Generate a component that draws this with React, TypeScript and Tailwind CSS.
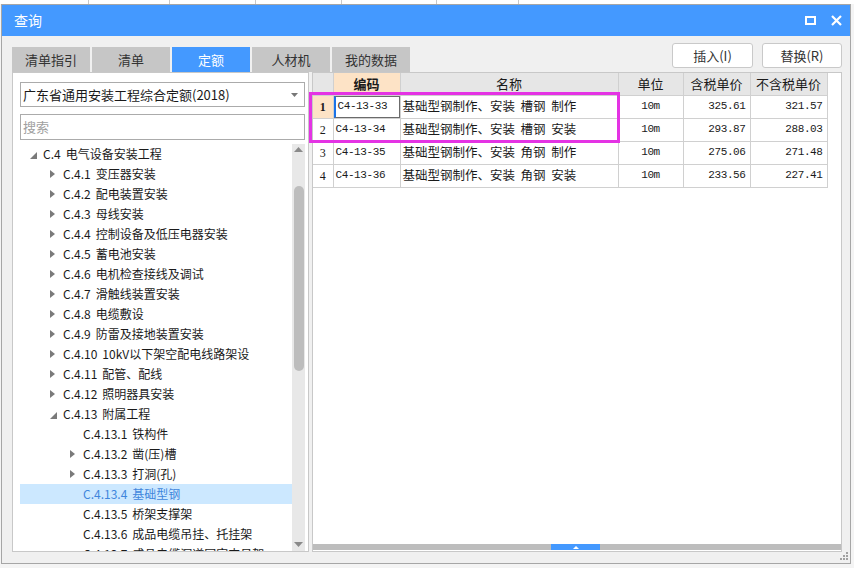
type TreeItem = { label: string; level: number; arrow: "open" | "closed" | "none"; active?: boolean };

const tree: TreeItem[] = [
  { label: "C.4 电气设备安装工程", level: 1, arrow: "open" },
  { label: "C.4.1 变压器安装", level: 2, arrow: "closed" },
  { label: "C.4.2 配电装置安装", level: 2, arrow: "closed" },
  { label: "C.4.3 母线安装", level: 2, arrow: "closed" },
  { label: "C.4.4 控制设备及低压电器安装", level: 2, arrow: "closed" },
  { label: "C.4.5 蓄电池安装", level: 2, arrow: "closed" },
  { label: "C.4.6 电机检查接线及调试", level: 2, arrow: "closed" },
  { label: "C.4.7 滑触线装置安装", level: 2, arrow: "closed" },
  { label: "C.4.8 电缆敷设", level: 2, arrow: "closed" },
  { label: "C.4.9 防雷及接地装置安装", level: 2, arrow: "closed" },
  { label: "C.4.10 10kV以下架空配电线路架设", level: 2, arrow: "closed" },
  { label: "C.4.11 配管、配线", level: 2, arrow: "closed" },
  { label: "C.4.12 照明器具安装", level: 2, arrow: "closed" },
  { label: "C.4.13 附属工程", level: 2, arrow: "open" },
  { label: "C.4.13.1 铁构件", level: 3, arrow: "none" },
  { label: "C.4.13.2 凿(压)槽", level: 3, arrow: "closed" },
  { label: "C.4.13.3 打洞(孔)", level: 3, arrow: "closed" },
  { label: "C.4.13.4 基础型钢", level: 3, arrow: "none", active: true },
  { label: "C.4.13.5 桥架支撑架", level: 3, arrow: "none" },
  { label: "C.4.13.6 成品电缆吊挂、托挂架", level: 3, arrow: "none" },
  { label: "C.4.13.7 成品电缆洞道固定支吊架", level: 3, arrow: "none" },
];

const rows = [
  { no: "1", code: "C4-13-33", name: "基础型钢制作、安装  槽钢  制作", unit: "10m", tax: "325.61", notax: "321.57" },
  { no: "2", code: "C4-13-34", name: "基础型钢制作、安装  槽钢  安装", unit: "10m", tax: "293.87", notax: "288.03" },
  { no: "3", code: "C4-13-35", name: "基础型钢制作、安装  角钢  制作", unit: "10m", tax: "275.06", notax: "271.48" },
  { no: "4", code: "C4-13-36", name: "基础型钢制作、安装  角钢  安装", unit: "10m", tax: "233.56", notax: "227.41" },
];

const tabs = ["清单指引", "清单", "定额", "人材机", "我的数据"];

const cjk = "font-['Microsoft_YaHei','Noto_Sans_CJK_SC',sans-serif]";
const mono = "font-['Liberation_Mono','Noto_Sans_CJK_SC',monospace] text-[11px] tracking-[-0.4px]";

function Arrow({ kind }: { kind: TreeItem["arrow"] }) {
  if (kind === "open")
    return (
      <svg width="7" height="7" viewBox="0 0 7 7" className="mt-[3px]">
        <polygon points="7,0 7,7 0,7" fill="#7a7a7a" />
      </svg>
    );
  if (kind === "closed")
    return (
      <svg width="5" height="8" viewBox="0 0 5 8">
        <polygon points="0,0 5,4 0,8" fill="#7a7a7a" />
      </svg>
    );
  return null;
}

export default function App() {
  return (
    <div className={`relative w-[854px] h-[568px] overflow-hidden bg-[#f4f4f4] ${cjk}`}>
      {/* app behind the dialog */}
      <div className="flex h-[4px] bg-white">
        <div className="w-[89px] border-r border-[#c8c8c8]" />
        <div className="w-[81px] border-r border-[#c8c8c8]" />
        <div className="w-[86px] border-r border-[#c8c8c8]" />
        <div className="w-[86px] border-r border-[#c8c8c8]" />
        <div className="w-[95px] border-r border-[#c8c8c8]" />
        <div className="w-[82px] border-r border-[#c8c8c8]" />
        <div className="flex-1" />
      </div>

      {/* dialog window */}
      <div className="absolute left-[1px] top-[4px] w-[850px] h-[560px] border border-[#a6a6a6] flex flex-col bg-[#f0f0f0]">
        {/* title bar */}
        <div className="h-[31px] bg-[#4499ff] flex items-center pl-[12px] pr-[8px] shrink-0">
          <span className="text-white text-[14px]">查询</span>
          <div className="ml-auto flex items-center gap-[15px]">
            <div className="w-[11px] h-[9px] border-2 border-white" />
            <svg width="11" height="11" viewBox="0 0 11 11">
              <path d="M1 1 L10 10 M10 1 L1 10" stroke="white" strokeWidth="2.2" />
            </svg>
          </div>
        </div>

        {/* body */}
        <div className="relative flex-1 flex flex-col pl-[10px] pr-[8px] pt-[7px]">
          <div className="flex justify-between h-[29px]">
            <div className="flex gap-[2px] self-end">
              {tabs.map((t) => (
                <div
                  key={t}
                  className={`w-[78px] h-[25px] flex items-center justify-center text-[13px] ${
                    t === "定额" ? "bg-[#4499ff] text-white" : "bg-[#c6c6c6] text-[#333]"
                  }`}
                >
                  {t}
                </div>
              ))}
            </div>
            <div className="flex gap-[9px]">
              <button className="w-[81px] h-[25px] bg-white border border-[#c9c9c9] rounded-[3px] text-[13px] text-[#333]">
                插入(I)
              </button>
              <button className="w-[80px] h-[25px] bg-white border border-[#c9c9c9] rounded-[3px] text-[13px] text-[#333]">
                替换(R)
              </button>
            </div>
          </div>

          <div className="flex gap-[3px] h-[480px]">
            {/* left panel */}
            <div className="w-[297px] bg-white border border-[#c8c8c8] flex flex-col pl-[7px] pr-[3px] pt-[9px]">
              <div className="h-[25px] border border-[#ababab] flex items-center pl-[2px] pr-[6px] text-[13px] text-[#1a1a1a]">
                <span>广东省通用安装工程综合定额(2018)</span>
                <svg width="7" height="4" viewBox="0 0 7 4" className="ml-auto">
                  <polygon points="0,0 7,0 3.5,4" fill="#777" />
                </svg>
              </div>
              <div className="mt-[7px] h-[26px] border border-[#ababab] flex items-center pl-[2px] text-[13px] text-[#a0a0a0]">
                搜索
              </div>
              <div className="mt-[4px] flex-1 flex min-h-0">
                <div className="flex-1 overflow-hidden">
                  {tree.map((it) => {
                    const sp = it.label.indexOf(" ");
                    return (
                      <div
                        key={it.label}
                        className={`h-[20px] flex items-center text-[12px] ${
                          it.active ? "bg-[#cce8ff] text-[#3f86dc]" : "text-[#1a1a1a]"
                        } ${it.level === 1 ? "pl-[10px]" : it.level === 2 ? "pl-[30px]" : "pl-[50px]"}`}
                      >
                        <div className="w-[13px] flex items-center">
                          <Arrow kind={it.arrow} />
                        </div>
                        <span className="whitespace-nowrap">{it.label.slice(0, sp)}</span>
                        <span className="whitespace-nowrap ml-[5px]">{it.label.slice(sp + 1)}</span>
                      </div>
                    );
                  })}
                </div>
                <div className="w-[13px] bg-[#e8e8e8] flex flex-col items-center pt-[3px] pb-[4px]">
                  <svg width="9" height="5" viewBox="0 0 9 5">
                    <polygon points="0,5 9,5 4.5,0" fill="#8a8a8a" />
                  </svg>
                  <div className="mt-[34px] w-[10px] h-[185px] rounded-[5px] bg-[#bdbdbd]" />
                  <svg width="9" height="5" viewBox="0 0 9 5" className="mt-auto">
                    <polygon points="0,0 9,0 4.5,5" fill="#8a8a8a" />
                  </svg>
                </div>
              </div>
            </div>

            {/* right panel */}
            <div className="relative flex-1 bg-white border border-[#c8c8c8] flex flex-col">
              <table className="table-fixed border-collapse text-[12px] text-[#1a1a1a] w-[514px]">
                <colgroup>
                  <col className="w-[20px]" />
                  <col className="w-[67px]" />
                  <col className="w-[218px]" />
                  <col className="w-[65px]" />
                  <col className="w-[67px]" />
                  <col className="w-[77px]" />
                </colgroup>
                <thead>
                  <tr className="h-[22px] text-[13px]">
                    <th className="bg-[#e6e6e6] border border-[#d0d0d0] border-t-0 border-l-0 font-normal" />
                    <th className="bg-[#fde3c6] border border-[#d0d0d0] border-t-0 font-bold">编码</th>
                    <th className="bg-[#e6e6e6] border border-[#d0d0d0] border-t-0 font-normal">名称</th>
                    <th className="bg-[#e6e6e6] border border-[#d0d0d0] border-t-0 font-normal">单位</th>
                    <th className="bg-[#e6e6e6] border border-[#d0d0d0] border-t-0 font-normal">含税单价</th>
                    <th className="bg-[#e6e6e6] border border-[#d0d0d0] border-t-0 font-normal">不含税单价</th>
                  </tr>
                </thead>
                <tbody>
                  {rows.map((r, i) => (
                    <tr key={r.no} className="h-[23px]">
                      <td
                        className={`border border-[#d0d0d0] border-l-0 text-center font-['Liberation_Serif',serif] text-[12px] ${
                          i === 0 ? "bg-[#fde3c6] font-bold" : ""
                        }`}
                      >
                        {r.no}
                      </td>
                      <td className="border border-[#d0d0d0] p-0">
                        <div
                          className={`h-[22px] flex items-center pl-[2px] ${mono} ${
                            i === 0 ? "border border-[#6b6b6b] border-l-2 border-l-[#1a73e8]" : ""
                          }`}
                        >
                          {r.code}
                        </div>
                      </td>
                      <td className="border border-[#d0d0d0] pl-[2px] whitespace-pre text-[12.5px]">{r.name}</td>
                      <td className={`border border-[#d0d0d0] text-center ${mono}`}>{r.unit}</td>
                      <td className={`border border-[#d0d0d0] text-right pr-[4px] ${mono}`}>{r.tax}</td>
                      <td className={`border border-[#d0d0d0] text-right pr-[4px] ${mono}`}>{r.notax}</td>
                    </tr>
                  ))}
                </tbody>
              </table>

              {/* horizontal scrollbar */}
              <div className="mt-auto mb-[1px] h-[6px] bg-[#bdbdbd] flex">
                <div className="ml-[238px] w-[49px] h-[6px] bg-[#4499ff] flex items-center justify-center">
                  <svg width="6" height="3" viewBox="0 0 6 3">
                    <polygon points="0,3 6,3 3,0" fill="white" />
                  </svg>
                </div>
              </div>

              {/* highlight frame */}
              <div className="absolute left-[-4px] top-[19px] w-[311px] h-[51px] border-[3px] border-[#e433e4] pointer-events-none" />
            </div>
          </div>

          {/* resize grip */}
          <svg width="10" height="10" viewBox="0 0 10 10" className="absolute right-[1px] bottom-[2px]">
            <rect x="7" y="1" width="2" height="2" fill="#a0a0a0" />
            <rect x="4" y="4" width="2" height="2" fill="#a0a0a0" />
            <rect x="7" y="4" width="2" height="2" fill="#a0a0a0" />
            <rect x="1" y="7" width="2" height="2" fill="#a0a0a0" />
            <rect x="4" y="7" width="2" height="2" fill="#a0a0a0" />
            <rect x="7" y="7" width="2" height="2" fill="#a0a0a0" />
          </svg>
        </div>
      </div>
    </div>
  );
}
